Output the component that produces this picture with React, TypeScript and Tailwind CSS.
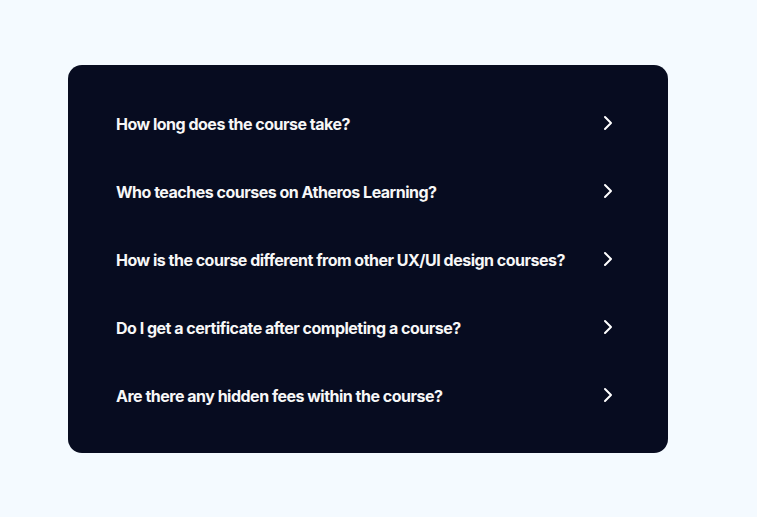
import { ChevronRight } from 'lucide-react';

const questions = [
    'How long does the course take?',
    'Who teaches courses on Atheros Learning?',
    'How is the course different from other UX/UI design courses?',
    'Do I get a certificate after completing a course?',
    'Are there any hidden fees within the course?',
];

export default function App() {
    return (
        <div className="min-h-[517px] w-full bg-[#f4faff] pt-[65px] pl-[68px] font-[Inter,sans-serif]">
            {/* FAQ card */}
            <div className="w-[600px] rounded-[14px] bg-[#070c20] px-12 py-6">
                {questions.map((q) => (
                    <button key={q} className="flex h-[68px] w-full items-center justify-between text-left">
                        <span className="pt-px text-[16px] font-bold tracking-[-0.5px] text-[#f7f7f7]">{q}</span>
                        <ChevronRight className="h-6 w-6 text-white" strokeWidth={2} />
                    </button>
                ))}
            </div>
        </div>
    );
}
